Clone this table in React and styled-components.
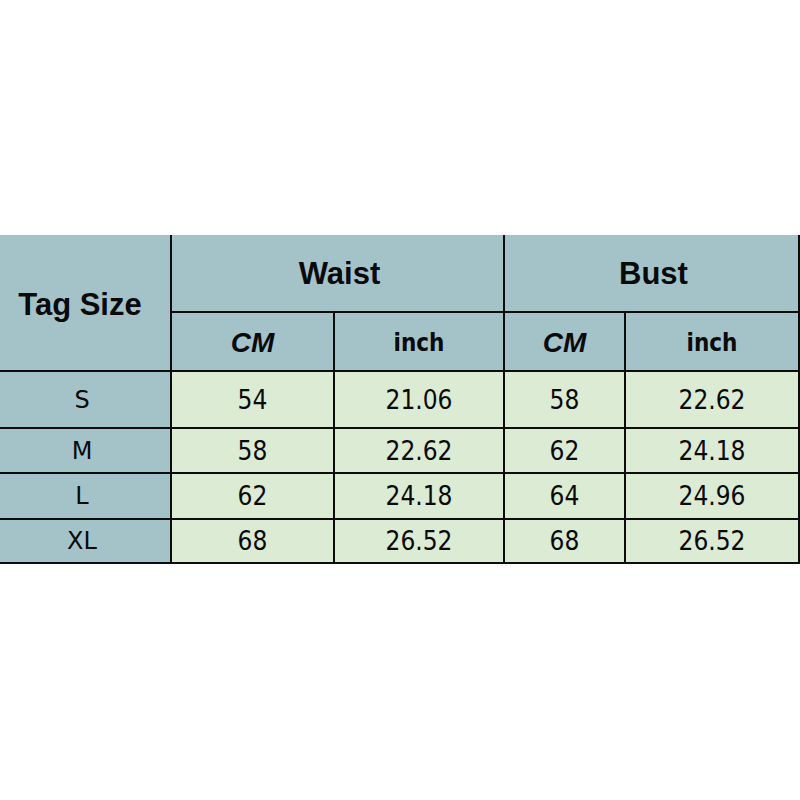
import React from "react";
import styled, { createGlobalStyle } from "styled-components";

const rows = [
  { size: "S", waistCm: "54", waistIn: "21.06", bustCm: "58", bustIn: "22.62" },
  { size: "M", waistCm: "58", waistIn: "22.62", bustCm: "62", bustIn: "24.18" },
  { size: "L", waistCm: "62", waistIn: "24.18", bustCm: "64", bustIn: "24.96" },
  { size: "XL", waistCm: "68", waistIn: "26.52", bustCm: "68", bustIn: "26.52" },
];

function App() {
  return (
    <>
      <GlobalStyle />
      <Page>
        <SizeGrid>
          <TagCell>Tag Size</TagCell>
          <GroupCell>Waist</GroupCell>
          <GroupCell>Bust</GroupCell>
          <UnitCell>
            <CmLabel>CM</CmLabel>
          </UnitCell>
          <UnitCell>
            <InchLabel>inch</InchLabel>
          </UnitCell>
          <UnitCell>
            <CmLabel>CM</CmLabel>
          </UnitCell>
          <UnitCell>
            <InchLabel>inch</InchLabel>
          </UnitCell>
          {rows.map((row) => (
            <React.Fragment key={row.size}>
              <SizeCell>{row.size}</SizeCell>
              <ValueCell>{row.waistCm}</ValueCell>
              <ValueCell>{row.waistIn}</ValueCell>
              <ValueCell>{row.bustCm}</ValueCell>
              <ValueCell>{row.bustIn}</ValueCell>
            </React.Fragment>
          ))}
        </SizeGrid>
      </Page>
    </>
  );
}

const GlobalStyle = createGlobalStyle`
  html, body {
    margin: 0;
    padding: 0;
    background: #ffffff;
  }
`;

const Page = styled.div`
  width: 800px;
  height: 800px;
  padding-top: 235px;
  box-sizing: border-box;
  background: #ffffff;
`;

const SizeGrid = styled.div`
  display: grid;
  grid-template-columns: 170px 161px 168px 119px 172px;
  grid-template-rows: 76px 57px 55px 43px 44px 42px;
  gap: 2px;
  padding: 0 2px 2px 0;
  width: 800px;
  box-sizing: border-box;
  background: #0c0c0c;
`;

const Cell = styled.div`
  display: flex;
  align-items: center;
  justify-content: center;
  color: #0a0a0a;
`;

const HeadCell = styled(Cell)`
  background: #a4c3c9;
  font-family: "Liberation Sans", Arial, sans-serif;
  font-weight: 700;
  font-size: 31px;
`;

const TagCell = styled(HeadCell)`
  grid-row: 1 / span 2;
  padding: 4px 10px 0 0;
`;

const GroupCell = styled(HeadCell)`
  grid-column: span 2;
  padding: 2px 0 0 4px;
`;

const UnitCell = styled(Cell)`
  background: #a4c3c9;
  padding-top: 2px;
`;

const CmLabel = styled.span`
  font-family: "Liberation Sans", Arial, sans-serif;
  font-weight: 700;
  font-style: italic;
  font-size: 28px;
`;

const InchLabel = styled.span`
  font-family: "DejaVu Sans Condensed", "DejaVu Sans", sans-serif;
  font-weight: 700;
  font-size: 24px;
`;

const SizeCell = styled(Cell)`
  background: #a4c3c9;
  font-family: "DejaVu Sans", sans-serif;
  font-size: 24px;
  padding-right: 6px;
`;

const ValueCell = styled(Cell)`
  background: #dcebd4;
  font-family: "DejaVu Sans Condensed", "DejaVu Sans", sans-serif;
  font-size: 26px;
`;

export default App;
